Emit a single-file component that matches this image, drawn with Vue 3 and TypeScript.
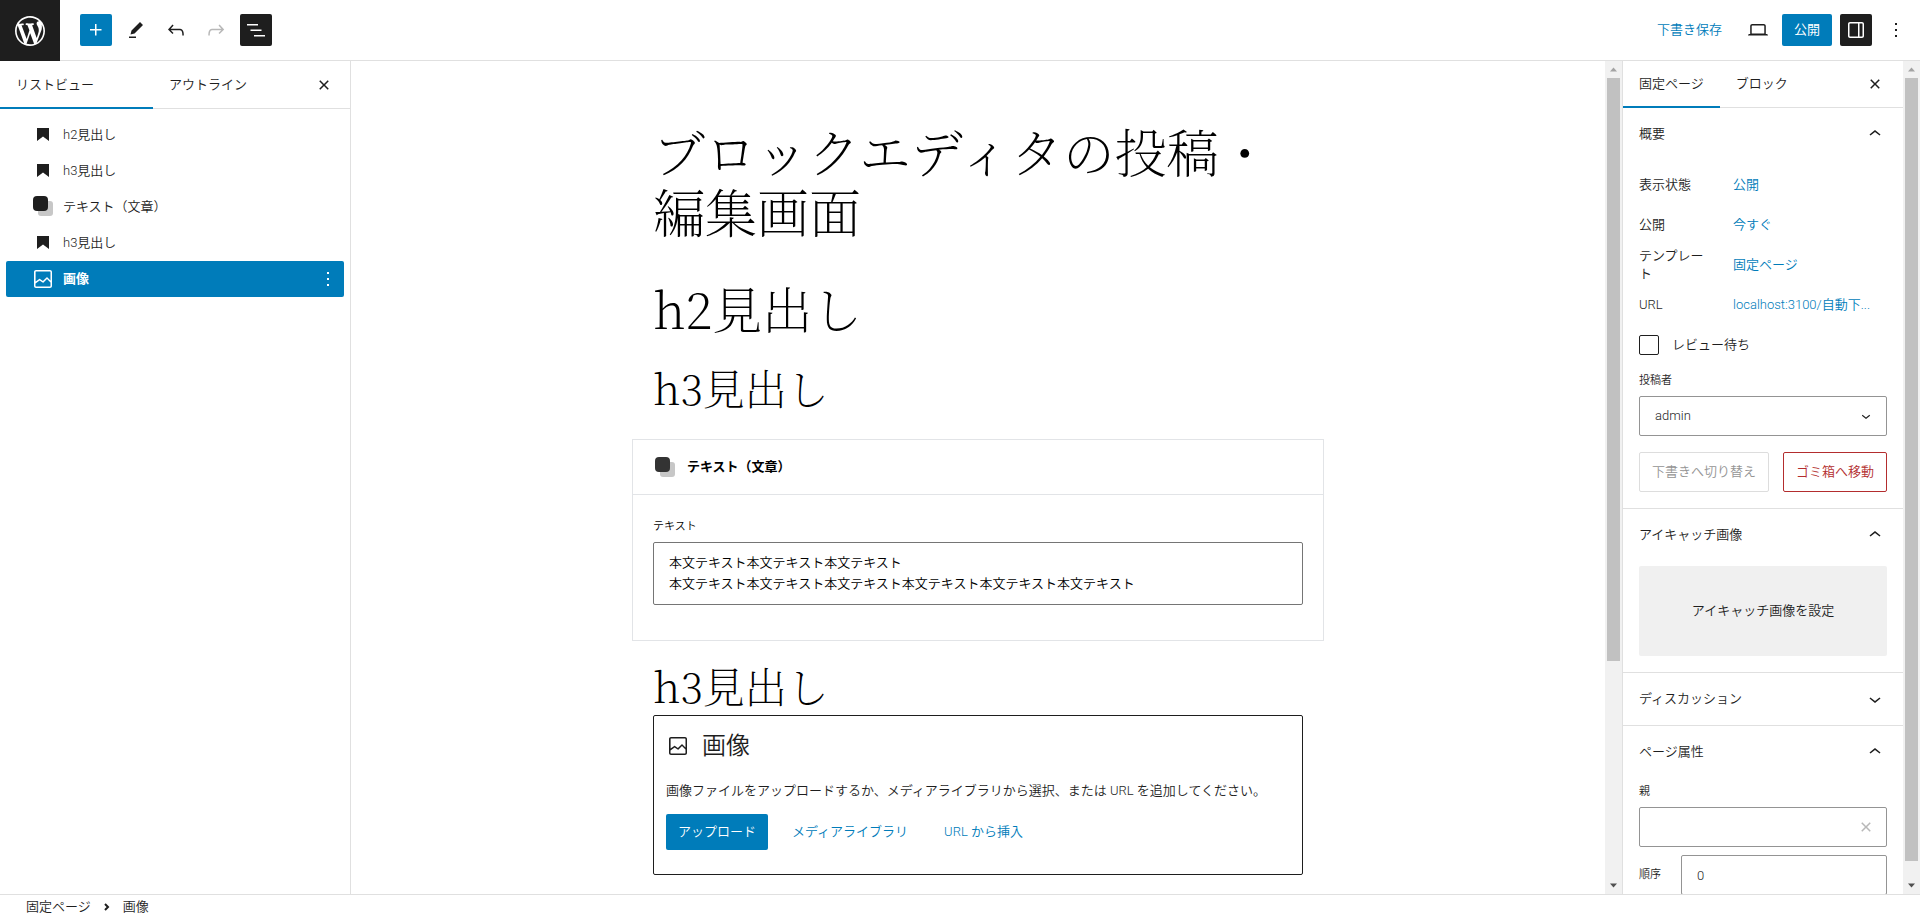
<script setup lang="ts">
import { ref } from 'vue'

const icons = {
  plus: 'M11 12.5V17.5H12.5V12.5H17.5V11H12.5V6H11V11H6V12.5H11Z',
  edit: 'm19 7-3-3-8.5 8.5-1 4 4-1L19 7Zm-7 11.5H5V20h7v-1.5Z',
  undo: 'M18.3 11.7c-.6-.6-1.4-.9-2.3-.9H6.7l2.9-3.3-1.1-1-4.5 5L8.5 16l1-1-2.7-2.7H16c.5 0 .9.2 1.3.5 1 1 1 3.4 1 4.5v.3h1.5v-.2c0-1.5 0-4.3-1.5-5.7z',
  redo: 'M15.6 6.5l-1.1 1 2.9 3.3H8c-.9 0-1.7.3-2.3.9-1.4 1.5-1.4 4.2-1.4 5.6v.2h1.5v-.3c0-1.1 0-3.5 1-4.5.3-.3.7-.5 1.3-.5h9.2L14.5 15l1.1 1.1 4.6-4.6-4.6-5z',
  list: 'M3 6h11v1.5H3V6Zm3.5 5.5h11V13h-11v-1.5ZM21 17H10v1.5h11V17Z',
  close: 'M12 13.06l3.712 3.713 1.061-1.06L13.061 12l3.712-3.712-1.06-1.06L12 10.938 8.288 7.227l-1.061 1.06L10.939 12l-3.712 3.712 1.06 1.061L12 13.061z',
  up: 'M6.5 12.4L12 8l5.5 4.4-.9 1.2L12 10l-4.5 3.6-1-1.2z',
  down: 'M17.5 11.6L12 16l-5.5-4.4.9-1.2L12 14l4.5-3.6 1 1.2z',
  more: 'M13 19h-2v-2h2v2zm0-6h-2v-2h2v2zm0-6h-2V5h2v2z',
  image: 'M19 3H5c-1.1 0-2 .9-2 2v14c0 1.1.9 2 2 2h14c1.1 0 2-.9 2-2V5c0-1.1-.9-2-2-2zM5 4.5h14c.3 0 .5.2.5.5v8.4l-3-2.9c-.3-.3-.8-.3-1 0L11.9 14 9 12c-.3-.2-.6-.2-.8 0l-3.6 2.6V5c-.1-.3.1-.5.4-.5zm14 15H5c-.3 0-.5-.2-.5-.5v-2.4l4.1-3 3 1.9c.3.2.7.2.9-.1L16 12l3.5 3.4V19c0 .3-.2.5-.5.5z',
  drawer: 'M18 4H6c-1.1 0-2 .9-2 2v12c0 1.1.9 2 2 2h12c1.1 0 2-.9 2-2V6c0-1.1-.9-2-2-2zm-4 14.5H6c-.3 0-.5-.2-.5-.5V6c0-.3.2-.5.5-.5h8v13zm4.5-.5c0 .3-.2.5-.5.5h-2.5v-13H18c.3 0 .5.2.5.5v12z',
  desktop: 'M20.5 16h-.7V8c0-1.1-.9-2-2-2H6.2c-1.1 0-2 .9-2 2v8h-.7c-.8 0-1.5.7-1.5 1.5h20c0-.8-.7-1.5-1.5-1.5zM5.7 8c0-.3.2-.5.5-.5h11.6c.3 0 .5.2.5.5v7.6H5.7V8z',
  bookmark: 'M6 5h12v13l-6-4.5L6 18V5z',
}

type Kind = 'bookmark' | 'squares' | 'image'
const blocks: { kind: Kind; label: string }[] = [
  { kind: 'bookmark', label: 'h2見出し' },
  { kind: 'bookmark', label: 'h3見出し' },
  { kind: 'squares', label: 'テキスト（文章）' },
  { kind: 'bookmark', label: 'h3見出し' },
  { kind: 'image', label: '画像' },
]
const selected = ref(4)

const summary = [
  { label: '表示状態', value: '公開' },
  { label: '公開', value: '今すぐ' },
  { label: 'テンプレート', value: '固定ページ' },
  { label: 'URL', value: 'localhost:3100/自動下...' },
]

const body = ref('本文テキスト本文テキスト本文テキスト\n本文テキスト本文テキスト本文テキスト本文テキスト本文テキスト本文テキスト')
const author = ref('admin')
const review = ref(false)
const parent = ref('')
const order = ref('0')
</script>

<template>
  <div class="editor">
    <header class="header">
      <a class="site-logo" href="#" aria-label="WordPress">
        <svg width="36" height="36" viewBox="-2 -2 24 24"><path d="M20 10c0-5.51-4.49-10-10-10C4.48 0 0 4.49 0 10c0 5.52 4.48 10 10 10 5.51 0 10-4.48 10-10zM7.78 15.37L4.37 6.22c.55-.02 1.17-.08 1.17-.08.5-.06.44-1.13-.06-1.11 0 0-1.45.11-2.37.11-.18 0-.37 0-.58-.01C4.12 2.69 6.87 1.11 10 1.11c2.33 0 4.45.87 6.05 2.34-.68-.11-1.65.39-1.65 1.58 0 .74.45 1.36.9 2.1.35.61.55 1.36.55 2.46 0 1.49-1.4 5-1.4 5l-3.03-8.37c.54-.02.82-.17.82-.17.5-.05.44-1.25-.06-1.22 0 0-1.44.12-2.38.12-.87 0-2.33-.12-2.33-.12-.5-.03-.56 1.2-.06 1.22l.92.08 1.26 3.41zM17.41 10c.24-.64.74-1.87.43-4.25.7 1.29 1.05 2.71 1.05 4.25 0 3.29-1.73 6.24-4.4 7.78.97-2.59 1.94-5.2 2.92-7.78zM6.1 18.09C3.12 16.65 1.11 13.53 1.11 10c0-1.3.23-2.48.72-3.59C3.25 10.3 4.67 14.2 6.1 18.09zm4.03-6.63l2.58 6.98c-.86.29-1.76.45-2.71.45-.79 0-1.57-.11-2.29-.33.81-2.38 1.62-4.74 2.42-7.1z" /></svg>
      </a>
      <div class="tools">
        <button class="tool primary" aria-label="ブロック挿入"><svg class="icon" viewBox="0 0 24 24"><path :d="icons.plus" /></svg></button>
        <button class="tool" aria-label="ツール"><svg class="icon" viewBox="0 0 24 24"><path :d="icons.edit" /></svg></button>
        <button class="tool" aria-label="元に戻す"><svg class="icon" viewBox="0 0 24 24"><path :d="icons.undo" /></svg></button>
        <button class="tool faded" aria-label="やり直す" disabled><svg class="icon" viewBox="0 0 24 24"><path :d="icons.redo" /></svg></button>
        <button class="tool dark" aria-label="リストビュー"><svg class="icon" viewBox="0 0 24 24"><path :d="icons.list" /></svg></button>
      </div>
      <div class="actions">
        <button class="link save">下書き保存</button>
        <button class="tool" aria-label="表示"><svg class="icon" viewBox="0 0 24 24"><path :d="icons.desktop" /></svg></button>
        <button class="publish">公開</button>
        <button class="tool dark" aria-label="設定"><svg class="icon" viewBox="0 0 24 24"><path :d="icons.drawer" /></svg></button>
        <button class="tool narrow" aria-label="オプション"><svg class="icon" viewBox="0 0 24 24"><path :d="icons.more" /></svg></button>
      </div>
    </header>

    <div class="main">
      <aside class="list-view">
        <div class="tabs">
          <button class="tab wide active">リストビュー</button>
          <button class="tab wide">アウトライン</button>
          <button class="tool close" aria-label="閉じる"><svg class="icon" viewBox="0 0 24 24"><path :d="icons.close" /></svg></button>
        </div>
        <ul class="tree">
          <li v-for="(block, i) in blocks" :key="i" class="node" :class="{ selected: selected === i }">
            <button class="node-name" @click="selected = i">
              <svg v-if="block.kind === 'squares'" class="icon" viewBox="0 0 24 24">
                <rect x="7" y="6" width="15" height="15" rx="3" fill="#c7c7c7" />
                <rect x="2" y="1" width="15" height="15" rx="4" />
              </svg>
              <svg v-else class="icon" viewBox="0 0 24 24"><path :d="icons[block.kind]" /></svg>
              <span>{{ block.label }}</span>
            </button>
            <button v-if="selected === i" class="tool node-more" aria-label="オプション"><svg class="icon" viewBox="0 0 24 24"><path :d="icons.more" /></svg></button>
          </li>
        </ul>
      </aside>

      <main class="canvas">
        <article class="post">
          <h1 class="title">ブロックエディタの投稿・<br />編集画面</h1>
          <h2 class="heading-two">h2見出し</h2>
          <h3 class="heading-three">h3見出し</h3>
          <section class="fields">
            <h4 class="fields-title">
              <svg class="icon" viewBox="0 0 24 24">
                <rect x="7" y="7" width="15" height="15" rx="3" fill="#c7c7c7" />
                <rect x="2" y="2" width="15" height="15" rx="4" fill="#333" />
              </svg>
              テキスト（文章）
            </h4>
            <div class="fields-body">
              <label for="body-text">テキスト</label>
              <textarea id="body-text" v-model="body" rows="2"></textarea>
            </div>
          </section>
          <h3 class="heading-three">h3見出し</h3>
          <section class="placeholder">
            <h4 class="placeholder-title"><svg class="icon" viewBox="0 0 24 24"><path :d="icons.image" /></svg>画像</h4>
            <p>画像ファイルをアップロードするか、メディアライブラリから選択、または URL を追加してください。</p>
            <div class="placeholder-actions">
              <button class="upload">アップロード</button>
              <button class="link">メディアライブラリ</button>
              <button class="link">URL から挿入</button>
            </div>
          </section>
        </article>
      </main>
      <div class="scrollbar" aria-hidden="true">
        <svg class="up" viewBox="0 0 7 4"><path d="M0 4 3.500 0 7 4z" /></svg>
        <div class="track"><i class="thumb canvas-thumb"></i></div>
        <svg viewBox="0 0 7 4"><path d="M0 0h7L3.500 4z" /></svg>
      </div>

      <aside class="settings">
        <div class="tabs">
          <button class="tab active">固定ページ</button>
          <button class="tab">ブロック</button>
          <button class="tool close" aria-label="閉じる"><svg class="icon" viewBox="0 0 24 24"><path :d="icons.close" /></svg></button>
        </div>

        <section class="panel">
          <button class="panel-head">概要<svg class="icon" viewBox="0 0 24 24"><path :d="icons.up" /></svg></button>
          <div class="panel-body">
            <div v-for="row in summary" :key="row.label" class="row">
              <span class="row-label">{{ row.label }}</span>
              <button class="link">{{ row.value }}</button>
            </div>
            <label class="check"><input v-model="review" type="checkbox" />レビュー待ち</label>
            <label class="caption" for="author">投稿者</label>
            <div class="control">
              <select id="author" v-model="author"><option>admin</option></select>
              <svg class="control-icon" viewBox="0 0 24 24"><path :d="icons.down" /></svg>
            </div>
            <div class="pair">
              <button class="outline" disabled>下書きへ切り替え</button>
              <button class="outline danger">ゴミ箱へ移動</button>
            </div>
          </div>
        </section>

        <section class="panel">
          <button class="panel-head">アイキャッチ画像<svg class="icon" viewBox="0 0 24 24"><path :d="icons.up" /></svg></button>
          <div class="panel-body"><button class="featured">アイキャッチ画像を設定</button></div>
        </section>

        <section class="panel">
          <button class="panel-head">ディスカッション<svg class="icon" viewBox="0 0 24 24"><path :d="icons.down" /></svg></button>
        </section>

        <section class="panel">
          <button class="panel-head">ページ属性<svg class="icon" viewBox="0 0 24 24"><path :d="icons.up" /></svg></button>
          <div class="panel-body">
            <label class="caption" for="parent">親</label>
            <div class="control">
              <input id="parent" v-model="parent" type="text" />
              <svg class="control-icon pale" viewBox="0 0 24 24"><path :d="icons.close" /></svg>
            </div>
            <div class="order">
              <label for="order">順序</label>
              <input id="order" v-model="order" type="text" />
            </div>
          </div>
        </section>
      </aside>
      <div class="scrollbar" aria-hidden="true">
        <svg class="up" viewBox="0 0 7 4"><path d="M0 4 3.500 0 7 4z" /></svg>
        <div class="track"><i class="thumb settings-thumb"></i></div>
        <svg viewBox="0 0 7 4"><path d="M0 0h7L3.500 4z" /></svg>
      </div>
    </div>

    <footer class="footer">
      <a href="#">固定ページ</a>
      <svg width="6" height="8" viewBox="0 0 6 8"><path d="M1 1l3 3-3 3" /></svg>
      <span>画像</span>
    </footer>
  </div>
</template>

<style>
body {
  margin: 0;
  overflow: hidden;
}
</style>

<style scoped>
.editor,
.editor * {
  box-sizing: border-box;
}
.editor {
  display: flex;
  flex-direction: column;
  height: 100vh;
  background: #fff;
  color: #1e1e1e;
  font-family: Roboto, "Noto Sans CJK JP", sans-serif;
  font-size: 13px;
  font-weight: 350;
  line-height: 18px;
}
button,
input,
select,
textarea {
  margin: 0;
  padding: 0;
  border: 0;
  border-radius: 2px;
  background: none;
  color: inherit;
  font: inherit;
}
h1,
h2,
h3,
h4,
p,
ul {
  margin: 0;
  padding: 0;
}
.icon {
  flex: none;
  width: 24px;
  height: 24px;
  fill: currentColor;
}
.link {
  color: #007cba;
  white-space: nowrap;
}

.header {
  flex: none;
  display: flex;
  align-items: center;
  height: 61px;
  border-bottom: 1px solid #e0e0e0;
}
.site-logo {
  display: flex;
  align-items: center;
  justify-content: center;
  width: 60px;
  height: 61px;
  margin-bottom: -1px;
  background: #1e1e1e;
}
.site-logo svg {
  fill: #fff;
}
.tools {
  display: flex;
  gap: 8px;
  margin-left: 20px;
}
.tool {
  display: flex;
  align-items: center;
  justify-content: center;
  flex: none;
  width: 32px;
  height: 32px;
}
.primary,
.publish,
.upload {
  background: #007cba;
  color: #fff;
}
.dark {
  background: #1e1e1e;
  color: #fff;
}
.faded {
  color: #b8b8b8;
}
.actions {
  display: flex;
  align-items: center;
  gap: 8px;
  margin-left: auto;
  padding-right: 12px;
}
.save {
  margin-right: 12px;
}
.publish {
  width: 50px;
  height: 32px;
  font-weight: 400;
}
.narrow {
  width: 24px;
  margin-left: 4px;
}

.main {
  flex: 1;
  display: flex;
  min-height: 0;
}
.tabs {
  display: flex;
  align-items: center;
  height: 48px;
  border-bottom: 1px solid #e0e0e0;
}
.tab {
  height: 48px;
  padding: 0 16px;
  border-radius: 0;
  text-align: left;
}
.tab.wide {
  width: 153px;
}
.tab.active {
  box-shadow: inset 0 -2px #007cba;
}
.close {
  margin-left: auto;
}

.list-view {
  flex: none;
  width: 351px;
  border-right: 1px solid #e0e0e0;
}
.list-view .tabs {
  padding-right: 10px;
}
.tree {
  padding: 8px 6px;
  list-style: none;
}
.node {
  display: flex;
  align-items: center;
  height: 36px;
  border-radius: 2px;
}
.node-name {
  flex: 1;
  display: flex;
  align-items: center;
  gap: 8px;
  height: 36px;
  padding-left: 25px;
  text-align: left;
}
.node.selected {
  background: #007cba;
  color: #fff;
  font-weight: 700;
}
.canvas {
  flex: 1;
  min-width: 0;
  overflow: hidden;
}
.post {
  display: flex;
  flex-direction: column;
  max-width: 650px;
  margin: 0 auto;
  padding-top: 60px;
}
.title,
.heading-two,
.heading-three {
  color: #000;
  font-family: "Noto Serif CJK JP", "Noto Sans CJK JP", "Liberation Serif", serif;
  font-weight: 100;
}
.title {
  font-size: 52px;
  line-height: 60px;
}
.heading-two {
  margin-top: 36px;
  font-size: 50px;
  line-height: 60px;
}
.heading-three {
  margin-top: 24px;
  font-size: 42px;
  line-height: 52px;
}
.fields {
  margin: 26px -21px 0;
  border: 1px solid #e2e4e7;
}
.fields-title {
  display: flex;
  align-items: center;
  gap: 10px;
  height: 55px;
  padding-left: 20px;
  border-bottom: 1px solid #e2e4e7;
  color: #000;
  font-size: 13px;
  font-weight: 600;
}
.fields-body {
  padding: 23px 20px 35px;
  color: #000;
}
.fields-body label {
  display: block;
  margin-bottom: 6px;
  font-size: 11px;
}
.fields-body textarea {
  display: block;
  width: 100%;
  height: 63px;
  padding: 9px 15px;
  border: 1px solid #757575;
  line-height: 21px;
  resize: none;
  overflow: hidden;
}
.fields + .heading-three {
  margin: 18px 0 4px;
}
.placeholder {
  height: 160px;
  padding: 12px;
  border: 1px solid #1e1e1e;
  border-radius: 2px;
}
.placeholder-title {
  display: flex;
  align-items: center;
  gap: 12px;
  height: 36px;
  font-size: 24px;
  font-weight: 350;
}
.placeholder p {
  margin: 18px 0 14px;
}
.placeholder-actions {
  display: flex;
  gap: 24px;
}
.upload {
  height: 36px;
  padding: 0 12px;
}
.placeholder-actions .link + .link {
  margin-left: 12px;
}

.scrollbar {
  flex: none;
  display: flex;
  flex-direction: column;
  align-items: center;
  gap: 6px;
  width: 17px;
  padding: 6px 2px;
  background: #f1f1f1;
}
.scrollbar svg {
  width: 7px;
  height: 5px;
  fill: #505050;
}
.scrollbar .up {
  fill: #a3a3a3;
}
.track {
  flex: 1;
  align-self: stretch;
}
.thumb {
  display: block;
  background: #c1c1c1;
}
.canvas-thumb {
  height: 73%;
}
.settings-thumb {
  height: 98%;
}

.settings {
  flex: none;
  width: 281px;
  overflow: hidden;
  border-left: 1px solid #e0e0e0;
}
.settings .tabs {
  height: 47px;
  padding-right: 12px;
}
.settings .tab {
  height: 47px;
}
.panel + .panel {
  border-top: 1px solid #e0e0e0;
}
.panel-head {
  display: flex;
  align-items: center;
  justify-content: space-between;
  width: 100%;
  height: 52px;
  padding: 0 16px;
}
.panel-body {
  padding: 5px 16px 16px;
}
.row {
  display: flex;
  align-items: center;
  height: 36px;
  margin-bottom: 4px;
}
.row:first-child {
  margin-top: 2px;
}
.row-label {
  width: 70px;
  margin-right: 24px;
}
.check {
  display: flex;
  align-items: center;
  gap: 13px;
  height: 20px;
  margin-top: 12px;
}
.check input {
  appearance: none;
  width: 20px;
  height: 20px;
  border: 1px solid #1e1e1e;
}
.caption {
  display: block;
  margin: 17px 0 6px;
  font-size: 11px;
}
.control {
  display: grid;
  align-items: center;
}
.control > * {
  grid-area: 1 / 1;
}
.control select,
.control input,
.order input {
  appearance: none;
  width: 100%;
  height: 40px;
  padding: 0 15px;
  border: 1px solid #949494;
}
.control-icon {
  justify-self: end;
  width: 18px;
  height: 18px;
  margin-right: 12px;
  fill: #1e1e1e;
  pointer-events: none;
}
.control-icon.pale {
  width: 24px;
  height: 24px;
  margin-right: 9px;
  fill: #b8b8b8;
}
.pair {
  display: flex;
  justify-content: space-between;
  margin-top: 16px;
}
.outline {
  height: 40px;
  padding: 0 12px;
  border: 1px solid #ddd;
  color: #949494;
  white-space: nowrap;
}
.outline.danger {
  border-color: #b32d2e;
  color: #b32d2e;
}
.featured {
  width: 100%;
  height: 90px;
  background: #f0f0f0;
}
.panel:last-child .panel-body {
  padding-top: 0;
}
.panel:last-child .caption {
  margin-top: 5px;
}
.order {
  display: flex;
  align-items: center;
  margin-top: 8px;
}
.order label {
  flex: none;
  width: 42px;
  font-size: 11px;
}

.footer {
  flex: none;
  display: flex;
  align-items: center;
  gap: 13px;
  height: 25px;
  padding-left: 26px;
  border-top: 1px solid #e0e0e0;
}
.footer a {
  color: inherit;
  text-decoration: none;
}
.footer svg {
  fill: none;
  stroke: #1e1e1e;
  stroke-width: 2;
}
</style>
